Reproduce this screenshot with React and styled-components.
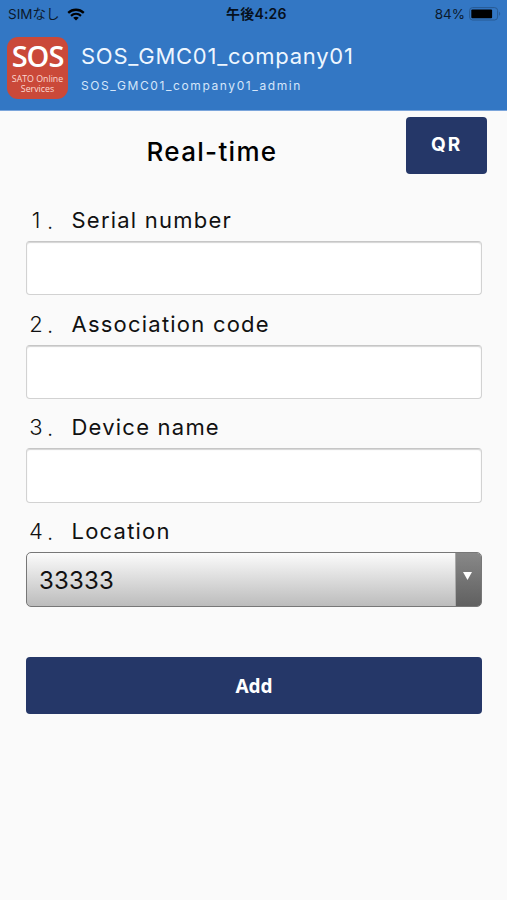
import React from 'react';
import styled, { createGlobalStyle } from 'styled-components';

const fields = [
	{ id: 'serial', number: '1', label: 'Serial number' },
	{ id: 'code', number: '2', label: 'Association code' },
	{ id: 'device', number: '3', label: 'Device name' },
];

function WifiIcon() {
	return (
		<svg width='18' height='13' viewBox='0 0 18 13' fill='none'>
			<path d='M1.2 4.8C5.6.7 12.4.7 16.8 4.8' stroke='#000' strokeWidth='2.3' />
			<path d='M4 7.9c2.9-2.6 7.1-2.6 10 0' stroke='#000' strokeWidth='2.2' />
			<path d='M9 12.4 6.2 9.7c1.6-1.4 4-1.4 5.6 0z' fill='#000' />
		</svg>
	);
}

function BatteryIcon() {
	return (
		<svg width='32' height='14' viewBox='0 0 32 14' fill='none'>
			<rect x='.6' y='.6' width='28' height='12.4' rx='3' stroke='#285a92' />
			<rect x='2.3' y='2.4' width='20.8' height='8.8' rx='1' fill='#000' />
			<path d='M30.2 4.8c1.3.6 1.3 3.4 0 4z' fill='#285a92' />
		</svg>
	);
}

function App() {
	return (
		<Screen>
			<GlobalStyle />
			<Header>
				<StatusBar>
					<Carrier>
						<span>SIMなし</span>
						<WifiIcon />
					</Carrier>
					<Clock>午後4:26</Clock>
					<Battery>
						<span>84%</span>
						<BatteryIcon />
					</Battery>
				</StatusBar>
				<Account>
					<Logo>
						<LogoTitle>SOS</LogoTitle>
						<LogoText>SATO Online</LogoText>
						<LogoText>Services</LogoText>
					</Logo>
					<div>
						<Company>SOS_GMC01_company01</Company>
						<User>SOS_GMC01_company01_admin</User>
					</div>
				</Account>
			</Header>
			<TitleRow>
				<Title>Real-time</Title>
				<QrButton>QR</QrButton>
			</TitleRow>
			<Form>
				{fields.map(({ id, number, label }) => (
					<React.Fragment key={id}>
						<Label htmlFor={id}>
							<Num>{number}</Num>
							<Dot>.</Dot>
							{label}
						</Label>
						<Input id={id} />
					</React.Fragment>
				))}
				<Label as='div'>
					<Num>4</Num>
					<Dot>.</Dot>
					Location
				</Label>
				<Select>
					<SelectValue>33333</SelectValue>
					<SelectArrow>
						<svg width='9' height='8' viewBox='0 0 9 8'>
							<path d='M0 0h9L4.5 8z' fill='#fff' />
						</svg>
					</SelectArrow>
				</Select>
				<AddButton>Add</AddButton>
			</Form>
		</Screen>
	);
}

const GlobalStyle = createGlobalStyle`
	* {
		box-sizing: border-box;
	}
	body {
		margin: 0;
		background: #fafafa;
		font-family: Inter, 'Noto Sans CJK JP', sans-serif;
	}
`;

const Screen = styled.div`
	min-height: 900px;
	background: #fafafa;
	color: #111;
`;

const Header = styled.header`
	height: 111px;
	background: #3377c4;
	border-bottom: 1px solid #7ba5db;
`;

const StatusBar = styled.div`
	height: 28px;
	padding: 0 6px 0 8px;
	display: grid;
	grid-template-columns: 218px auto 1fr;
	align-items: center;
	font-size: 13.5px;
	line-height: 28px;
	color: #0b1a2c;
`;

const Carrier = styled.div`
	display: flex;
	align-items: center;
	gap: 8px;
`;

const Clock = styled.div`
	font-size: 14px;
	font-weight: 600;
	letter-spacing: 0.2px;
	color: #06101c;
`;

const Battery = styled.div`
	display: flex;
	align-items: center;
	justify-content: flex-end;
	gap: 4px;
`;

const Account = styled.div`
	display: flex;
	padding: 9px 0 0 7px;
	gap: 13px;
	color: #eef6ff;
`;

const Logo = styled.div`
	width: 61px;
	height: 62px;
	padding-top: 4px;
	border-radius: 11px;
	background: #ca4939;
	text-align: center;
	color: #fff;
	font-family: 'Open Sans', 'Noto Sans', sans-serif;
`;

const LogoTitle = styled.div`
	font-size: 29px;
	font-weight: 600;
	line-height: 30px;
	letter-spacing: -1px;
`;

const LogoText = styled.div`
	font-size: 8.8px;
	line-height: 10px;
	color: #fbd9d2;
	white-space: nowrap;

	&:nth-child(2) {
		margin-top: 3px;
	}
`;

const Company = styled.div`
	margin-top: 5px;
	font-size: 22px;
	line-height: 28px;
	letter-spacing: 0.75px;
`;

const User = styled.div`
	margin-top: 8px;
	font-size: 12px;
	line-height: 16px;
	letter-spacing: 1.6px;
	color: #d5e6fa;
`;

const TitleRow = styled.div`
	height: 83px;
	padding: 6px 20px 0 26px;
	display: flex;
	justify-content: space-between;
`;

const Title = styled.h1`
	margin: 0;
	width: 372px;
	font-size: 26px;
	font-weight: 500;
	line-height: 70px;
	letter-spacing: 1.3px;
	text-align: center;
	color: #000;
`;

const QrButton = styled.button`
	width: 81px;
	height: 57px;
	padding: 0 0 2px;
	border: 0;
	border-radius: 4px;
	background: #253768;
	color: #fff;
	font-family: inherit;
	font-size: 19px;
	font-weight: 700;
	letter-spacing: 2px;
`;

const Form = styled.div`
	padding: 0 25px 0 26px;
	display: flex;
	flex-direction: column;
`;

const Label = styled.label`
	display: flex;
	height: 47px;
	padding: 3px 0 0 2px;
	font-size: 22px;
	line-height: 47px;
	letter-spacing: 1.22px;
	white-space: nowrap;
`;

const Num = styled.span`
	width: 16px;
	text-align: center;
	font-weight: 350;
	letter-spacing: 0;
`;

const Dot = styled.span`
	width: 27.5px;
	padding: 1px 0 0 3px;
	font-weight: 350;
	letter-spacing: 0;
`;

const Input = styled.input`
	width: 100%;
	height: 54.4px;
	margin-bottom: 2.3px;
	border: 1px solid #d2d2d2;
	border-top: 1px solid #c6c6c6;
	border-radius: 4px;
	background: #fff;
	box-shadow: inset 0 1px 1px #d4d4d4;
`;

const Select = styled.div`
	display: flex;
	height: 55px;
	border: 1px solid #777;
	border-radius: 5px;
	overflow: hidden;
	background: linear-gradient(#fbfbfb, #bcbcbc);
`;

const SelectValue = styled.div`
	flex: 1;
	padding-left: 12px;
	font-size: 24px;
	line-height: 55px;
	letter-spacing: 0.15px;
`;

const SelectArrow = styled.div`
	width: 26px;
	padding: 19px 0 0 7px;
	border-left: 1px solid #aaa;
	background: linear-gradient(#888, #606060);
	line-height: 0;
`;

const AddButton = styled.button`
	height: 57px;
	margin-top: 50px;
	border: 0;
	border-radius: 4px;
	background: #253768;
	color: #fff;
	font-family: 'Noto Sans', sans-serif;
	font-size: 19px;
	font-weight: 700;
`;

export default App;
